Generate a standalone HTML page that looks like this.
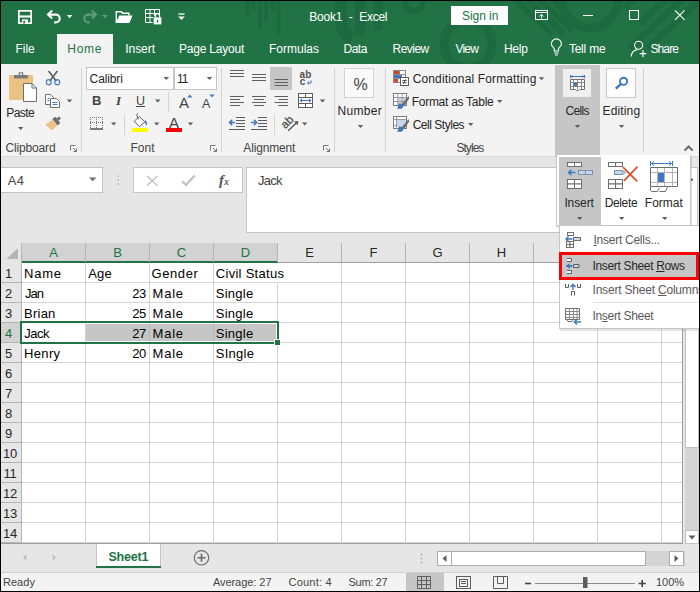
<!DOCTYPE html>
<html lang="en">
<head>
<meta charset="utf-8">
<title>Book1 - Excel</title>
<style>
html,body{margin:0;padding:0;}
body{width:700px;height:592px;overflow:hidden;background:#e6e6e6;font-family:"Liberation Sans",sans-serif;font-size:12px;color:#262626;position:relative;}
#app{position:absolute;left:0;top:0;width:700px;height:592px;overflow:hidden;background:#e6e6e6;}
.abs{position:absolute;}
svg.abs{left:0;top:0;overflow:visible;}
.t{position:absolute;white-space:nowrap;line-height:14px;height:14px;}
/* title + tabs */
#titlebar{left:0;top:0;width:700px;height:64px;background:#217346;}
#hometab{left:57px;top:34px;width:56px;height:30px;background:#f3f3f3;}
.tab{color:#fff;font-size:12px;top:42px;}
/* ribbon */
#ribbon{left:0;top:64px;width:700px;height:92px;background:#f3f3f3;}
.sep{position:absolute;width:1px;background:#d4d4d4;top:68px;height:84px;}
.grp{font-size:12px;color:#444;top:141px;}
.rb{font-size:12px;color:#262626;}
.box{position:absolute;background:#fff;border:1px solid #c6c6c6;box-sizing:border-box;}
/* grid */
#grid{left:1px;top:243px;width:682px;height:301px;background:#fff;overflow:hidden;}
.ch{position:absolute;top:243px;height:19px;text-align:center;font-size:13px;line-height:19px;color:#262626;}
.ch.sel{color:#217346;}
.rh{position:absolute;left:0px;width:17px;height:19px;font-size:13px;line-height:21px;color:#262626;text-align:center;}
.rh.sel{color:#217346;}
.c{position:absolute;font-size:13px;line-height:19px;height:19px;white-space:nowrap;color:#000;}
.n{text-align:right;width:60px;}
/* status */
#sheetbar{left:0;top:544px;width:700px;height:28px;background:#e6e6e6;}
#status{left:0;top:572px;width:700px;height:20px;background:#f3f3f3;border-top:1px solid #d0d0d0;box-sizing:border-box;}
.st{font-size:11px;color:#444;top:575px;}
/* dropdown */
.mi{font-size:12px;color:#5a5a5a;}
</style>
</head>
<body>
<div id="app">

<!-- ================= TITLE BAR ================= -->
<div id="titlebar" class="abs"></div>
<svg class="abs" width="700" height="64" viewBox="0 0 700 64">
  <!-- decorative darker pattern -->
  <g fill="#1e6a40" stroke="none">
    <rect x="245" y="0" width="5" height="16"/><rect x="251.500" y="0" width="4" height="10"/>
    <rect x="257.500" y="0" width="4.500" height="29"/><rect x="264" y="0" width="4" height="22"/>
    <rect x="271" y="0" width="4" height="12"/><rect x="276.500" y="0" width="4" height="34"/>
    <rect x="355" y="0" width="10" height="36"/><rect x="374" y="0" width="9" height="30"/>
  </g>
  <g fill="none" stroke="#1e6a40">
    <path d="M341 0 V20 C341 30 346 36 352 38" stroke-width="12"/>
    <circle cx="414" cy="2" r="9" stroke-width="6"/>
    <circle cx="468" cy="44" r="24" stroke-width="9"/>
    <path d="M516 0 L552 34 M528 0 L564 34 M540 0 L572 30 M552 0 L580 26" stroke-width="6"/>
    <path d="M562 0 A28 28 0 0 0 618 0" stroke-width="9"/>
    <path d="M625 8 L635 -2 M640 24 L670 -4 M630 48 L688 -6 M648 48 L704 -4" stroke-width="6.500"/>
  </g>
</svg>
<div id="hometab" class="abs"></div>

<span id="t_title" class="t" style="left:309.3px;top:10px;font-size:12px;color:#fff;word-spacing:3.6px;letter-spacing:-0.25px;">Book1 - Excel</span>
<div class="abs" style="left:451px;top:6px;width:57px;height:19px;background:#fff;"></div>
<span id="t_signin" class="t" style="left:462.0px;top:8.7px;font-size:12px;color:#217346;letter-spacing:-0.05px;">Sign in</span>

<span id="t_file" class="t tab" style="left:15.5px;letter-spacing:-0.03px;">File</span>
<span id="t_home" class="t tab" style="left:67.3px;color:#217346;letter-spacing:0.70px;">Home</span>
<span id="t_insert" class="t tab" style="left:125.3px;letter-spacing:-0.06px;">Insert</span>
<span id="t_pagelayout" class="t tab" style="left:179.0px;letter-spacing:-0.20px;">Page Layout</span>
<span id="t_formulas" class="t tab" style="left:269.0px;letter-spacing:0.00px;">Formulas</span>
<span id="t_data" class="t tab" style="left:343.4px;letter-spacing:-0.43px;">Data</span>
<span id="t_review" class="t tab" style="left:392.6px;letter-spacing:-0.54px;">Review</span>
<span id="t_view" class="t tab" style="left:455.4px;letter-spacing:-0.77px;">View</span>
<span id="t_help" class="t tab" style="left:503.9px;letter-spacing:-0.23px;">Help</span>
<span id="t_tellme" class="t tab" style="left:568.9px;letter-spacing:-0.22px;">Tell me</span>
<span id="t_share" class="t tab" style="left:650.4px;letter-spacing:-0.85px;">Share</span>

<svg class="abs" width="700" height="64" viewBox="0 0 700 64">
  <!-- save -->
  <g fill="none" stroke="#fff" stroke-width="1.7">
    <rect x="18.850" y="10.850" width="12.300" height="12.300"/>
    <path d="M18.850 16.500 H31.150" stroke-width="2.100"/>
    <rect x="22" y="19.400" width="6" height="4" fill="#fff" stroke="none"/>
    <rect x="23.300" y="20.800" width="1.700" height="2.600" fill="#217346" stroke="none"/>
  </g>
  <!-- undo -->
  <g fill="none" stroke="#fff" stroke-width="2.100" stroke-linejoin="miter">
    <path d="M52.200 10.600 L48 14.600 L52.200 18.600"/>
    <path d="M48.600 14.600 H55.800 A3.900 3.900 0 0 1 55.800 22.400 H54.200"/>
  </g>
  <path d="M66.800 15 H72.400 L69.600 18.200 Z" fill="#fff"/>
  <!-- redo (disabled) -->
  <g fill="none" stroke="#5f9a7b" stroke-width="2.100">
    <path d="M91.800 10.600 L96 14.600 L91.800 18.600"/>
    <path d="M95.400 14.600 H88.200 A3.900 3.900 0 0 0 88.200 22.400 H89.800"/>
  </g>
  <path d="M102 15 H107.600 L104.800 18.200 Z" fill="#5f9a7b"/>
  <!-- open folder -->
  <g fill="#fff" stroke="none">
    <path d="M115.6 23 V11 H121.5 L123 12.6 H129.6 V15.2 H128.2 V14 H122.3 L120.9 12.4 H117 V20.2 L119.3 15.4 H132.6 L129.4 23 Z"/>
  </g>
  <!-- grid with lock -->
  <g fill="none" stroke="#fff" stroke-width="1">
    <path d="M145.500 9.500 H159.500 V15 M145.500 9.500 V22.500 H152.500 M145.500 13.500 H159.500 M145.500 17.500 H153 M150 9.500 V22.500 M154.500 9.500 V16"/>
  </g>
  <rect x="153.600" y="17.400" width="7.800" height="7" fill="#fff"/>
  <path d="M155.400 17.600 V15.800 A2.100 2.100 0 0 1 159.600 15.800 V17.600" fill="none" stroke="#fff" stroke-width="1.300"/>
  <rect x="157" y="19.600" width="1.200" height="3" fill="#217346"/>
  <!-- customize qat -->
  <rect x="178.4" y="13.4" width="6.2" height="1.3" fill="#fff"/>
  <path d="M178.2 16.4 H184.8 L181.5 20 Z" fill="#fff"/>
  <!-- ribbon display options -->
  <g fill="none" stroke="#fff" stroke-width="1">
    <rect x="535.5" y="10.5" width="12" height="9"/>
    <path d="M535.5 12.5 H547.5"/>
    <path d="M541.5 18.5 V14.5 M539.3 16.5 L541.5 14.3 L543.7 16.5"/>
  </g>
  <!-- window controls -->
  <path d="M583 15.5 H593" stroke="#fff" stroke-width="1" fill="none"/>
  <rect x="629.5" y="10.5" width="9" height="9" fill="none" stroke="#fff" stroke-width="1"/>
  <path d="M675 10.3 L684.6 19.9 M684.6 10.3 L675 19.9" stroke="#fff" stroke-width="1.1" fill="none"/>
  <!-- light bulb -->
  <g fill="none" stroke="#fff" stroke-width="1.1">
    <path d="M554.3 51 V48.8 C553.6 47.2 551.4 46.4 551.4 43.9 A5 5 0 0 1 561.4 43.9 C561.4 46.4 559.2 47.2 558.5 48.8 V51 Z"/>
    <path d="M554.3 53 H558.5 M555 55 H557.8"/>
  </g>
  <!-- share person+ -->
  <g fill="none" stroke="#fff" stroke-width="1.1">
    <circle cx="638.6" cy="45.2" r="4"/>
    <path d="M631.2 56.5 C631.6 52.4 634.2 50.2 637 49.6"/>
    <path d="M643 50.3 V57 M639.7 53.6 H646.3" stroke-width="1.2"/>
  </g>
</svg>


<!-- ================= RIBBON ================= -->
<div id="ribbon" class="abs"></div>
<div class="abs" style="left:0;top:156px;width:700px;height:1px;background:#dadada;"></div>
<div class="abs" style="left:555px;top:65px;width:45px;height:92px;background:#c6c6c6;"></div>
<div class="abs" style="left:563px;top:69px;width:28px;height:28px;background:#efefef;"></div>
<div class="abs" style="left:270px;top:67px;width:22px;height:23px;background:#c6c6c6;"></div>

<div class="sep" style="left:81px;"></div>
<div class="sep" style="left:221px;"></div>
<div class="sep" style="left:334px;"></div>
<div class="sep" style="left:385px;"></div>
<div class="sep" style="left:643px;"></div>
<div class="sep" style="left:168px;top:92px;height:20px;"></div>
<div class="sep" style="left:124px;top:115px;height:20px;"></div>
<div class="sep" style="left:274px;top:114px;height:21px;"></div>

<span id="t_paste" class="t rb" style="left:6.2px;top:106px;letter-spacing:-0.52px;">Paste</span>
<span id="t_clipboard" class="t grp" style="left:5.5px;letter-spacing:-0.16px;">Clipboard</span>
<span id="t_font" class="t grp" style="left:130.4px;letter-spacing:0.07px;">Font</span>
<span id="t_alignment" class="t grp" style="left:243.3px;letter-spacing:-0.16px;">Alignment</span>
<span id="t_number" class="t rb" style="left:337.4px;top:104px;letter-spacing:0.34px;">Number</span>
<span id="t_styles" class="t grp" style="left:456.4px;letter-spacing:-0.94px;">Styles</span>
<span id="t_cells" class="t rb" style="left:565.6px;top:104px;letter-spacing:-0.70px;">Cells</span>
<span id="t_editing" class="t rb" style="left:602.5px;top:104px;letter-spacing:0.15px;">Editing</span>

<div class="box" style="left:86px;top:67px;width:88px;height:23px;"></div>
<div class="box" style="left:174px;top:67px;width:43px;height:23px;"></div>
<span id="t_calibri" class="t rb" style="left:89.6px;top:72px;letter-spacing:-0.12px;">Calibri</span>
<span id="t_11" class="t rb" style="left:177.0px;top:72px;letter-spacing:-1.0px;">11</span>
<span id="t_B" class="t" style="left:92px;top:94px;font-size:13px;font-weight:bold;color:#444;">B</span>
<span id="t_I" class="t" style="left:116px;top:94px;font-size:13px;font-style:italic;font-family:'Liberation Serif',serif;font-weight:bold;color:#444;">I</span>
<span id="t_U" class="t" style="left:136px;top:94px;font-size:12.5px;color:#444;text-decoration:underline;">U</span>
<span id="t_Agrow" class="t" style="left:179px;top:95.5px;font-size:15px;color:#444;">A</span>
<span id="t_Ashrink" class="t" style="left:202px;top:96.5px;font-size:12.5px;color:#444;">A</span>
<span id="t_Acolor" class="t" style="left:169px;top:116px;font-size:15px;color:#444;">A</span>

<div class="box" style="left:344px;top:68px;width:30px;height:30px;background:#fafafa;border-color:#d2d2d2;"></div>
<span id="t_pct" class="t" style="left:353.5px;top:77.5px;font-size:16px;color:#444;">%</span>
<div class="box" style="left:606px;top:68px;width:30px;height:30px;background:#fdfdfd;border-color:#c8c8c8;"></div>

<span id="t_cf" class="t rb" style="left:412.7px;top:72px;letter-spacing:0.14px;">Conditional Formatting</span>
<span id="t_fat" class="t rb" style="left:411.7px;top:95px;letter-spacing:-0.27px;">Format as Table</span>
<span id="t_cs" class="t rb" style="left:412.7px;top:118px;letter-spacing:-0.48px;">Cell Styles</span>

<svg class="abs" width="700" height="160" viewBox="0 0 700 160">
  <!-- dropdown arrows -->
  <g fill="#5e5e5e">
    <path d="M18 127 H23.4 L20.7 130 Z"/>
    <path d="M66.8 99.6 H72.2 L69.5 102.6 Z"/>
    <path d="M163.6 77 H169 L166.3 80 Z"/>
    <path d="M206.8 77 H212.2 L209.5 80 Z"/>
    <path d="M155 99.6 H160.4 L157.7 102.6 Z"/>
    <path d="M111 122.6 H116.4 L113.7 125.6 Z"/>
    <path d="M154 122.6 H159.4 L156.7 125.6 Z"/>
    <path d="M187.8 122.6 H193.2 L190.5 125.6 Z"/>
    <path d="M319.8 99.6 H325.2 L322.5 102.6 Z"/>
    <path d="M302 122.6 H307.4 L304.7 125.6 Z"/>
    <path d="M357.8 125 H363.2 L360.5 128 Z"/>
    <path d="M538.8 77.2 H544.2 L541.5 80.2 Z"/>
    <path d="M497 100 H502.4 L499.7 103 Z"/>
    <path d="M468 123 H473.4 L470.7 126 Z"/>
    <path d="M574.8 125 H580.2 L577.5 128 Z"/>
    <path d="M618.8 125 H624.2 L621.5 128 Z"/>
  </g>
  <!-- dialog launchers -->
  <g fill="none" stroke="#777" stroke-width="1">
    <path d="M70.5 150.5 V145.5 H75.5 M73 148 L76.5 151.5 M76.5 148.5 V151.5 H73.5"/>
    <path d="M210.5 150.5 V145.5 H215.5 M213 148 L216.5 151.5 M216.5 148.5 V151.5 H213.5"/>
    <path d="M323.5 150.5 V145.5 H328.5 M326 148 L329.5 151.5 M329.5 148.5 V151.5 H326.5"/>
  </g>
  <!-- collapse caret -->
  <path d="M684.5 150.600 L688.6 146.500 L692.7 150.600" fill="none" stroke="#6a6a6a" stroke-width="2"/>

  <!-- paste -->
  <rect x="9" y="75" width="24" height="25" rx="1" fill="#eac282"/>
  <path d="M14 78.5 V75 H18.6 V72.2 H23.2 V75 H27.8 V78.5 Z" fill="#7a7a7a"/>
  <rect x="19.8" y="73.4" width="2.2" height="1.6" fill="#f3f3f3"/>
  <path d="M23.5 83.5 H32 L36.5 88 V101.5 H23.5 Z" fill="#fff" stroke="#6e6e6e" stroke-width="1"/>
  <path d="M32 83.5 V88 H36.5" fill="none" stroke="#6e6e6e" stroke-width="1"/>
  <!-- scissors -->
  <g fill="none" stroke-width="1.4">
    <path d="M48.6 71 L56.4 81.2 M57.4 71 L49.6 81.2" stroke="#5e5e5e" stroke-width="1.6"/>
    <circle cx="48.8" cy="82.2" r="2.5" stroke="#4a7ebb" stroke-width="1.200"/>
    <circle cx="57.2" cy="82.2" r="2.5" stroke="#4a7ebb" stroke-width="1.200"/>
  </g>
  <!-- copy -->
  <g stroke="#6e6e6e" stroke-width="1" fill="#fff">
    <path d="M45.5 94.5 H50.5 L53.5 97.5 V104.5 H45.5 Z"/>
    <path d="M50.5 98.5 H56.5 L59.5 101.5 V107.5 H50.5 Z"/>
  </g>
  <path d="M47.5 98.5 H49.5 M47.5 100.5 H49.5 M52.5 102.5 H57.5 M52.5 104.5 H57.5" stroke="#4a7ebb" stroke-width="1" fill="none"/>
  <!-- format painter -->
  <path d="M45.2 124.5 L52.5 119.8 L57 126 L51.5 130.3 Z" fill="#eac282"/>
  <path d="M52.2 118.8 L55.6 116.8 L60.4 123 L57.4 125.6 Z" fill="#6e6e6e"/>
  <path d="M56.6 118.2 L59.2 116.4 L61 118.6 L58.6 120.6 Z" fill="#6e6e6e"/>

  <!-- underline for U -->
  <!-- grow/shrink triangles -->
  <path d="M187.2 97.4 L189.8 94.4 L192.4 97.4 Z" fill="#3f77c1"/>
  <path d="M209.4 94.4 H214.6 L212 97.4 Z" fill="#3f77c1"/>
  <!-- borders icon -->
  <g stroke="#777" stroke-width="1" stroke-dasharray="1 1" fill="none">
    <path d="M90.5 117 V128 M96.5 117 V128 M102.5 117 V128 M90 117.5 H103 M90 122.5 H103"/>
  </g>
  <path d="M90 129 H103" stroke="#444" stroke-width="1.4"/>
  <!-- fill bucket -->
  <rect x="132" y="128" width="16" height="4" fill="#ffff00"/>
  <path d="M139.2 116.4 L144.8 121.8 L139.6 126.6 L134.2 121.4 Z" fill="#fff" stroke="#5e5e5e" stroke-width="1"/>
  <path d="M138 113.8 C136.8 113.8 136.6 115 137 116 L138.6 119.4" fill="none" stroke="#5e5e5e" stroke-width="1"/>
  <path d="M145 120 C147 121.6 147.6 123.6 146.6 125.4 C145.2 124.6 144.8 122.6 145 120 Z" fill="#3f77c1"/>
  <!-- font color bar -->
  <rect x="166" y="128" width="16" height="4" fill="#ff0000"/>

  <!-- alignment row 1 -->
  <g stroke="#5e5e5e" stroke-width="1" fill="none">
    <path d="M230 70.5 H244 M230 73.5 H244 M230 76.5 H244"/>
    <path d="M252 74.5 H266 M252 77.5 H266 M252 80.5 H266"/>
    <path d="M274.5 79.5 H288 M274.5 82.5 H288 M274.5 85.5 H288"/>
    <path d="M230 96.5 H244 M230 99.5 H240 M230 102.5 H244 M230 105.5 H240"/>
    <path d="M252 96.5 H266 M254 99.5 H264 M252 102.5 H266 M254 105.5 H264"/>
    <path d="M274.5 96.5 H288 M278.5 99.5 H288 M274.5 102.5 H288 M278.5 105.5 H288"/>
    <path d="M236 117.5 H245 M236 120.5 H245 M236 123.5 H245 M236 126.5 H245 M229 129.5 H245"/>
    <path d="M258 117.5 H267 M258 120.5 H267 M258 123.5 H267 M258 126.5 H267 M251 129.5 H267"/>
  </g>
  <!-- indent arrows -->
  <g stroke="#3f77c1" stroke-width="1.6" fill="none">
    <path d="M229.6 122.5 H235 M232.2 119.8 L229.6 122.5 L232.2 125.2"/>
    <path d="M251 122.5 H256.6 M254 119.8 L256.6 122.5 L254 125.2"/>
  </g>
  <!-- wrap text -->
  <text x="299.6" y="77.6" font-family="Liberation Sans, sans-serif" font-size="10" font-weight="bold" fill="#505050" letter-spacing="0.2">ab</text>
  <text x="299.8" y="84.9" font-family="Liberation Sans, sans-serif" font-size="10" font-weight="bold" fill="#505050">c</text>
  <path d="M311 80.4 V83 H307.6 M309 81.600 L307.400 83 L309 84.400" stroke="#3f77c1" stroke-width="1" fill="none"/>
  <!-- merge & center -->
  <g stroke="#5e5e5e" stroke-width="1" fill="#fff">
    <rect x="298.5" y="93.5" width="14" height="14"/>
    <path d="M298.5 97.5 H312.5 M298.5 103.5 H312.5 M305.5 93.5 V97.5 M305.5 103.5 V107.5" fill="none"/>
  </g>
  <path d="M300.4 100.5 H310.6 M302 99 L300.4 100.5 L302 102 M309 99 L310.6 100.5 L309 102" stroke="#3f77c1" stroke-width="1.1" fill="none"/>
  <!-- orientation -->
  <text transform="translate(285.3,129.3) rotate(-45)" font-family="Liberation Sans, sans-serif" font-size="11.500" fill="#4a4a4a" stroke="#4a4a4a" stroke-width="0.250">ab</text>
  <path d="M288.200 130.700 L297.200 122" stroke="#5a5a5a" stroke-width="1.500" fill="none"/>
  <path d="M298.300 120.900 L294 121.500 L297.700 125.200 Z" fill="#5a5a5a"/>

  <!-- conditional formatting icon -->
  <g>
    <rect x="393.5" y="70.5" width="12" height="12" fill="#fff" stroke="#8a8a8a"/>
    <rect x="394" y="71" width="5" height="3.4" fill="#d24726"/>
    <rect x="394" y="75" width="8" height="3.4" fill="#3f77c1"/>
    <rect x="394" y="79" width="4" height="3.2" fill="#d24726"/>
    <path d="M399.5 70.5 V75 M393.5 74.6 H405.5 M393.5 78.6 H400" stroke="#8a8a8a" fill="none"/>
    <rect x="400.5" y="77.5" width="8" height="8" fill="#fff" stroke="#5e5e5e"/>
    <path d="M402.4 80.5 H406.6 M402.4 82.6 H406.6 M405.6 79.4 L403.4 83.8" stroke="#444" stroke-width="0.9" fill="none"/>
  </g>
  <!-- format as table icon -->
  <g>
    <rect x="393.5" y="93.5" width="13" height="12" fill="#fff" stroke="#7a7a7a"/>
    <rect x="398" y="98" width="8" height="7" fill="#c8d6ea"/><path d="M393.5 97.5 H406.5 M393.5 101.5 H406.5 M397.8 93.5 V105.5 M402.2 93.5 V105.5" stroke="#9a9a9a" fill="none"/>
    <path d="M408.6 96 L401.4 104.4 L404 106.2 L409.2 98.6 Z" fill="#6e6e6e"/>
    <path d="M399 103.6 C401 103 403.6 104.6 403.2 107 C402.4 109.2 398.6 109 397 108.4 C398.6 107.4 398 105 399 103.6 Z" fill="#3f77c1"/>
  </g>
  <!-- cell styles icon -->
  <g>
    <rect x="393.5" y="116.500" width="13" height="12" fill="#fff" stroke="#7a7a7a"/>
    <rect x="397" y="120" width="9" height="7" fill="#c8d6ea"/>
    <path d="M393.5 119.500 H406.5 M396.500 116.500 V128.500 M393.500 125.500 H397" stroke="#9a9a9a" fill="none"/>
    <path d="M408.600 119 L401.400 127.400 L404 129.200 L409.200 121.600 Z" fill="#6e6e6e"/>
    <path d="M399 126.600 C401 126 403.600 127.600 403.200 130 C402.400 132.200 398.600 132 397 131.400 C398.600 130.400 398 128 399 126.600 Z" fill="#3f77c1"/>
  </g>

  <!-- cells icon -->
  <g>
    <path d="M570.5 75 V78 M584.5 75 V78 M571 76.500 H584 M572.600 75.200 L571.200 76.500 L572.600 77.800 M582.400 75.200 L583.800 76.500 L582.400 77.800" stroke="#3f77c1" stroke-width="1" fill="none"/>
    <path d="M570.500 79.500 H584.500 V89.500 H579.500 L578.500 90.500 H576.500 L575.500 89.500 H570.500 Z" fill="#fff" stroke="#6e6e6e"/>
    <path d="M570.500 82.500 H584.500 M570.500 86.500 H584.500 M573.500 79.500 V89.500 M577.500 79.500 V89.500 M581.500 79.500 V89.500" stroke="#8a8a8a" fill="none"/>
    <rect x="574" y="83" width="3" height="3" fill="#3f77c1"/>
  </g>
  <!-- editing (search) icon -->
  <circle cx="623.600" cy="81.300" r="3.600" fill="none" stroke="#3f77c1" stroke-width="1.900"/>
  <path d="M620.800 84.200 L615.800 88.600" stroke="#3f77c1" stroke-width="2.400" fill="none"/>
</svg>


<!-- ================= FORMULA BAR ================= -->
<div class="box" style="left:0px;top:167px;width:103px;height:26px;"></div>
<span id="t_a4" class="t" style="left:7.8px;top:174px;font-size:13px;color:#444;letter-spacing:0.30px;">A4</span>
<div class="box" style="left:133px;top:167px;width:110px;height:26px;"></div>
<div class="box" style="left:246px;top:167px;width:452px;height:66px;"></div>
<span id="t_fjack" class="t" style="left:258.1px;top:174px;font-size:13px;color:#444;letter-spacing:-0.77px;">Jack</span>
<span id="t_fx" class="t" style="left:219px;top:173px;font-size:14px;font-style:italic;font-family:'Liberation Serif',serif;color:#555;"><span style="font-size:15px;font-weight:bold;">f</span><span style="font-size:10px;font-weight:bold;">x</span></span>
<svg class="abs" width="700" height="240" viewBox="0 0 700 240">
  <path d="M89 177.400 H96.400 L92.700 181.200 Z" fill="#6e6e6e"/>
  <path d="M690.500 180.500 L692 178 L693.500 180.500 Z" fill="#444"/>
  <g fill="#b0b0b0"><rect x="117.500" y="175.500" width="1.400" height="1.400"/><rect x="117.500" y="179.500" width="1.400" height="1.400"/><rect x="117.500" y="183.500" width="1.400" height="1.400"/></g>
  <path d="M147 176 L157.400 185.400 M157.400 176 L147 185.400" stroke="#c0c0c0" stroke-width="1.400" fill="none"/>
  <path d="M182 181.200 L186 185 L194.800 175.600" stroke="#c0c0c0" stroke-width="2.200" fill="none"/>
</svg>


<!-- ================= GRID ================= -->
<div id="grid" class="abs"></div>
<div class="abs" style="left:1px;top:243px;width:682px;height:19px;background:#e6e6e6;"></div>
<div class="abs" style="left:1px;top:262px;width:682px;height:1px;background:#9f9f9f;"></div>
<div class="abs" style="left:1px;top:243px;width:20px;height:301px;background:#e6e6e6;"></div>
<div class="abs" style="left:21px;top:243px;width:1px;height:301px;background:#b4b4b4;"></div>
<div class="abs" style="left:22px;top:243px;width:256px;height:18px;background:#d2d2d2;"></div>
<div class="abs" style="left:22px;top:261px;width:256px;height:2px;background:#217346;"></div>
<div class="abs" style="left:1px;top:323px;width:19px;height:19px;background:#d2d2d2;"></div>
<svg class="abs" width="700" height="592" viewBox="0 0 700 592">
<g stroke="#d4d4d4" stroke-width="1" fill="none">
<path d="M85.5 263 V544 M149.5 263 V544 M213.5 263 V544 M277.5 263 V544 M341.5 263 V544 M405.5 263 V544 M469.5 263 V544 M533.5 263 V544 M597.5 263 V544 M661.5 263 V544 M22 282.5 H682 M22 302.5 H682 M22 322.5 H682 M22 342.5 H682 M22 362.5 H682 M22 382.5 H682 M22 402.5 H682 M22 422.5 H682 M22 442.5 H682 M22 462.5 H682 M22 482.5 H682 M22 502.5 H682 M22 522.5 H682 M22 542.5 H682"/>
</g>
<path d="M85.5 243 V262 M149.5 243 V262 M213.5 243 V262 M277.5 243 V262 M341.5 243 V262 M405.5 243 V262 M469.5 243 V262 M533.5 243 V262 M597.5 243 V262 M661.5 243 V262" stroke="#b4b4b4" stroke-width="1" fill="none"/>
<path d="M1 282.5 H21 M1 302.5 H21 M1 322.5 H21 M1 342.5 H21 M1 362.5 H21 M1 382.5 H21 M1 402.5 H21 M1 422.5 H21 M1 442.5 H21 M1 462.5 H21 M1 482.5 H21 M1 502.5 H21 M1 522.5 H21 M1 542.5 H21" stroke="#b4b4b4" stroke-width="1" fill="none"/>
<path d="M18 248.200 V259 H6.400 Z" fill="#b4b4b4"/>
<rect x="86" y="324" width="190" height="17" fill="#c6c6c6"/>
<path d="M149.500 324 V341 M213.500 324 V341" stroke="#b8b8b8" stroke-width="1" fill="none"/>
<rect x="21" y="322" width="257" height="21" fill="none" stroke="#217346" stroke-width="2"/>
<rect x="274" y="339" width="7" height="7" fill="#fff"/>
<rect x="275" y="340" width="5" height="5" fill="#217346"/>
<path d="M682.500 243 V544" stroke="#9f9f9f" stroke-width="1" fill="none"/>
<path d="M1 543.500 H683" stroke="#9f9f9f" stroke-width="1" fill="none"/>
</svg>
<div class="ch sel" style="left:22px;width:63px;">A</div>
<div class="ch sel" style="left:86px;width:63px;">B</div>
<div class="ch sel" style="left:150px;width:63px;">C</div>
<div class="ch sel" style="left:214px;width:63px;">D</div>
<div class="ch" style="left:278px;width:63px;">E</div>
<div class="ch" style="left:342px;width:63px;">F</div>
<div class="ch" style="left:406px;width:63px;">G</div>
<div class="ch" style="left:470px;width:63px;">H</div>
<div class="ch" style="left:534px;width:63px;">I</div>
<div class="ch" style="left:598px;width:63px;">J</div>
<div class="rh" style="top:263px;">1</div>
<div class="rh" style="top:283px;">2</div>
<div class="rh" style="top:303px;">3</div>
<div class="rh sel" style="top:323px;">4</div>
<div class="rh" style="top:343px;">5</div>
<div class="rh" style="top:363px;">6</div>
<div class="rh" style="top:383px;">7</div>
<div class="rh" style="top:403px;">8</div>
<div class="rh" style="top:423px;">9</div>
<div class="rh" style="top:443px;left:1.5px;letter-spacing:-0.3px;">10</div>
<div class="rh" style="top:463px;left:1.5px;letter-spacing:-0.3px;">11</div>
<div class="rh" style="top:483px;left:1.5px;letter-spacing:-0.3px;">12</div>
<div class="rh" style="top:503px;left:1.5px;letter-spacing:-0.3px;">13</div>
<div class="rh" style="top:523px;left:1.5px;letter-spacing:-0.3px;">14</div>
<div id="c1" class="c" style="left:24.0px;top:264px;letter-spacing:0.80px;">Name</div>
<div id="c2" class="c" style="left:88.2px;top:264px;letter-spacing:0.20px;">Age</div>
<div id="c3" class="c" style="left:151.6px;top:264px;letter-spacing:0.56px;">Gender</div>
<div class="abs" style="left:277px;top:263px;width:1px;height:19px;background:#fff;"></div>
<div id="c4" class="c" style="left:215.8px;top:264px;letter-spacing:0.28px;">Civil Status</div>
<div id="c5" class="c" style="left:25.0px;top:284px;letter-spacing:-1.0px;">Jan</div>
<div id="c6" class="c n" style="left:86px;top:284px;letter-spacing:-0.3px;">23</div>
<div id="c7" class="c" style="left:152.6px;top:284px;letter-spacing:0.74px;">Male</div>
<div id="c8" class="c" style="left:215.8px;top:284px;letter-spacing:0.24px;">Single</div>
<div id="c9" class="c" style="left:24.0px;top:304px;letter-spacing:0.25px;">Brian</div>
<div id="c10" class="c n" style="left:86px;top:304px;letter-spacing:-0.3px;">25</div>
<div id="c11" class="c" style="left:152.6px;top:304px;letter-spacing:0.74px;">Male</div>
<div id="c12" class="c" style="left:215.8px;top:304px;letter-spacing:0.24px;">Single</div>
<div id="c13" class="c" style="left:24.2px;top:324px;letter-spacing:-0.5px;">Jack</div>
<div id="c14" class="c n" style="left:86px;top:324px;letter-spacing:-0.3px;">27</div>
<div id="c15" class="c" style="left:152.6px;top:324px;letter-spacing:0.74px;">Male</div>
<div id="c16" class="c" style="left:215.8px;top:324px;letter-spacing:0.24px;">Single</div>
<div id="c17" class="c" style="left:24.0px;top:344px;letter-spacing:0.36px;">Henry</div>
<div id="c18" class="c n" style="left:86px;top:344px;letter-spacing:-0.3px;">20</div>
<div id="c19" class="c" style="left:152.6px;top:344px;letter-spacing:0.74px;">Male</div>
<div id="c20" class="c" style="left:215.8px;top:344px;letter-spacing:0.24px;">SIngle</div>


<!-- ================= SHEET BAR + STATUS ================= -->
<div id="sheetbar" class="abs"></div>
<div class="abs" style="left:96px;top:544px;width:65px;height:23px;background:#fff;border-left:1px solid #c6c6c6;border-right:1px solid #c6c6c6;box-sizing:border-box;"></div>
<div class="abs" style="left:96px;top:566px;width:65px;height:2px;background:#217346;"></div>
<span id="t_sheet1" class="t" style="left:108.4px;top:550px;font-size:12.5px;font-weight:bold;color:#217346;letter-spacing:-0.18px;">Sheet1</span>
<div id="status" class="abs"></div>
<div class="abs" style="left:406px;top:573px;width:38px;height:18px;background:#c6c6c6;"></div>
<span id="t_ready" class="t st" style="left:2.9px;letter-spacing:0.08px;">Ready</span>
<span id="t_avg" class="t st" style="left:212.9px;letter-spacing:-0.05px;">Average: 27</span>
<span id="t_count" class="t st" style="left:288.6px;letter-spacing:0.20px;">Count: 4</span>
<span id="t_sum" class="t st" style="left:348.6px;letter-spacing:-0.32px;">Sum: 27</span>
<span id="t_zoom" class="t st" style="left:656.0px;letter-spacing:0.00px;">100%</span>
<!-- scrollbars -->
<div class="abs" style="left:685px;top:243px;width:14px;height:301px;background:#d4d4d4;"></div>
<div class="abs" style="left:685px;top:243px;width:14px;height:205px;background:#fff;border:1px solid #c0c0c0;box-sizing:border-box;"></div>
<div class="abs" style="left:685px;top:530px;width:14px;height:14px;background:#fff;border:1px solid #c0c0c0;box-sizing:border-box;"></div>
<div class="abs" style="left:437px;top:551px;width:248px;height:15px;background:#d4d4d4;"></div>
<div class="box" style="left:437px;top:551px;width:15px;height:15px;border-color:#ababab;"></div>
<div class="box" style="left:451px;top:551px;width:195px;height:15px;border-color:#ababab;"></div>
<div class="box" style="left:669px;top:551px;width:15px;height:15px;border-color:#ababab;"></div>
<svg class="abs" width="700" height="592" viewBox="0 0 700 592">
  <path d="M26.400 554 V561 L23 557.500 Z M52.600 554 V561 L56 557.500 Z" fill="#c0c0c0"/>
  <circle cx="201.500" cy="557.800" r="7.200" fill="none" stroke="#6a6a6a" stroke-width="1.100"/>
  <path d="M197.500 557.800 H205.500 M201.500 553.800 V561.800" stroke="#6a6a6a" stroke-width="1.600" fill="none"/>
  <g fill="#9a9a9a"><rect x="420.800" y="553.800" width="1.400" height="1.400"/><rect x="420.800" y="557.800" width="1.400" height="1.400"/><rect x="420.800" y="561.800" width="1.400" height="1.400"/></g>
  <path d="M446.500 555 V562 L442.500 558.500 Z M674.500 555 V562 L678.500 558.500 Z" fill="#5e5e5e"/>
  <path d="M688.500 535.500 H695.500 L692 539.500 Z" fill="#5e5e5e"/>
  <!-- view buttons -->
  <g fill="none" stroke="#5e5e5e" stroke-width="1">
    <path d="M417.500 576.500 H430.500 V588.500 H417.500 Z M417.500 580.500 H430.500 M417.500 584.500 H430.500 M421.500 576.500 V588.500 M426.500 576.500 V588.500"/>
    <rect x="456.500" y="576.500" width="14" height="12"/>
    <rect x="459.500" y="579.500" width="8" height="7"/>
    <path d="M461 581.500 H466 M461 583.500 H466"/>
    <path d="M493.500 576.500 H507.500 V588.500 H493.500 Z M497.500 576.500 V583.500 H503.500 V576.500"/>
  </g>
  <!-- zoom slider -->
  <path d="M525 583.500 H531" stroke="#444" stroke-width="1.600" fill="none"/>
  <path d="M535 583.500 H635" stroke="#8a8a8a" stroke-width="1" fill="none"/>
  <rect x="583" y="577" width="4.500" height="11" fill="#5e5e5e"/>
  <path d="M638.600 583.500 H645.800 M642.200 580 V587" stroke="#444" stroke-width="1.600" fill="none"/>
</svg>


<!-- ================= DROPDOWN ================= -->
<div class="abs" style="left:556px;top:157px;width:136px;height:71px;background:rgba(0,0,0,0.10);"></div>
<div class="abs" style="left:556px;top:155px;width:135px;height:71px;background:#fff;border:1px solid #c6c6c6;box-sizing:border-box;border-top:none;"></div>
<div class="abs" style="left:559px;top:157px;width:42px;height:69px;background:#c6c6c6;"></div>
<div class="abs" style="left:560px;top:226px;width:141px;height:105px;background:rgba(0,0,0,0.10);"></div>
<div class="abs" style="left:559px;top:225px;width:142px;height:104px;background:#fff;border:1px solid #c6c6c6;box-sizing:border-box;"></div>
<div class="abs" style="left:559px;top:252px;width:140px;height:28px;background:#c6c6c6;border:3px solid #ff0000;box-sizing:border-box;"></div>
<div class="abs" style="left:593px;top:302px;width:108px;height:1px;background:#e1e1e1;"></div>

<span id="t_dinsert" class="t rb" style="left:564.4px;top:196px;letter-spacing:-0.10px;">Insert</span>
<span id="t_ddelete" class="t rb" style="left:604.7px;top:196px;letter-spacing:-0.36px;">Delete</span>
<span id="t_dformat" class="t rb" style="left:644.8px;top:196px;letter-spacing:0.02px;">Format</span>
<span id="t_m1" class="t mi" style="left:593.5px;top:233px;letter-spacing:-0.26px;"><u>I</u>nsert Cells...</span>
<span id="t_m2" class="t mi" style="left:592.5px;top:259px;color:#262626;letter-spacing:-0.34px;">Insert Sheet <u>R</u>ows</span>
<span id="t_m3" class="t mi" style="left:592.5px;top:283px;letter-spacing:-0.2px;">Insert Sheet <u>C</u>olumns</span>
<span id="t_m4" class="t mi" style="left:592.5px;top:309px;letter-spacing:-0.33px;">In<u>s</u>ert Sheet</span>

<svg class="abs" width="700" height="592" viewBox="0 0 700 592">
  <g fill="#5e5e5e">
    <path d="M577 217 H582.400 L579.700 220 Z"/>
    <path d="M619 217 H624.400 L621.700 220 Z"/>
    <path d="M662 217 H667.400 L664.700 220 Z"/>
  </g>
  <!-- Insert icon -->
  <g fill="#fff" stroke="#6e6e6e" stroke-width="1">
    <rect x="567.500" y="162.500" width="7" height="4"/><rect x="574.500" y="162.500" width="7" height="4"/>
    <rect x="567.500" y="179.500" width="7" height="4.500"/><rect x="574.500" y="179.500" width="7" height="4.500"/>
    <rect x="567.500" y="184" width="7" height="4.500"/><rect x="574.500" y="184" width="7" height="4.500"/>
  </g>
  <g fill="#c8d6ea" stroke="#7a8fae" stroke-width="1">
    <rect x="578.500" y="170.500" width="7" height="4"/><rect x="585.500" y="170.500" width="7" height="4"/>
  </g>
  <path d="M568.600 172.500 H575.400 M571.400 169.700 L568.600 172.500 L571.400 175.300" stroke="#3f77c1" stroke-width="1.600" fill="none"/>
  <!-- Delete icon -->
  <g fill="#fff" stroke="#6e6e6e" stroke-width="1">
    <rect x="608.500" y="162.500" width="7" height="4"/><rect x="615.500" y="162.500" width="7" height="4"/>
    <rect x="608.500" y="179.500" width="7" height="4.500"/><rect x="615.500" y="179.500" width="7" height="4.500"/>
    <rect x="608.500" y="184" width="7" height="4.500"/><rect x="615.500" y="184" width="7" height="4.500"/>
  </g>
  <rect x="614.500" y="170.500" width="8" height="4" fill="#c8d6ea" stroke="#7a8fae"/>
  <path d="M622.500 170.500 L625.500 172.500 L622.500 174.500" fill="#c8d6ea" stroke="#7a8fae"/>
  <path d="M623.400 167.600 L636.800 180.800 M637 167.200 L624.400 180.400" stroke="#d6532f" stroke-width="1.800" stroke-linecap="round" fill="none"/>
  <!-- Format icon -->
  <path d="M650.500 161 V166 M672.500 161 V166 M651.500 163.500 H671.500 M654 161.300 L651.600 163.500 L654 165.700 M669 161.300 L671.400 163.500 L669 165.700" stroke="#3f77c1" stroke-width="1" fill="none"/>
  <path d="M650.500 167.500 H677.500 V186.500 H650.500 Z" fill="#fff" stroke="#6e6e6e"/>
  <path d="M651 172.500 H677 M651 182.500 H677 M657.500 168 V186 M664.500 168 V186 M672.500 168 V186" stroke="#b4b4b4" fill="none"/>
  <path d="M650.500 186.500 V190.500 L651.500 191.500 H657.500 L659.500 188 M659.500 191.500 H665.500 L667.500 187" stroke="#6e6e6e" fill="none"/>
  <rect x="658" y="173" width="6" height="9" fill="#3f77c1"/>

  <!-- menu icon 1: insert cells -->
  <g fill="#fff" stroke="#6e6e6e" stroke-width="1">
    <rect x="567.500" y="232.500" width="6" height="3"/>
    <rect x="566.500" y="241.500" width="3.500" height="3"/><rect x="570" y="241.500" width="3.500" height="3"/>
    <rect x="566.500" y="244.500" width="3.500" height="3"/><rect x="570" y="244.500" width="3.500" height="3"/>
    <rect x="573.500" y="237.500" width="7" height="3" fill="#c8d6ea"/>
  </g>
  <path d="M566 239 H572.500 M568.600 236.400 L566 239 L568.600 241.600" stroke="#3f77c1" stroke-width="1.400" fill="none"/>
  <!-- menu icon 2: insert rows -->
  <g fill="#fff" stroke="#5e5e5e" stroke-width="1">
    <path d="M567 258.500 H571.500 V261.500 H567 Z M567 270.500 H571.500 V273.500 H567 Z" stroke="none"/>
    <path d="M567 258.500 H571.500 V261.500 H567 M567 270.500 H571.500 V273.500 H567" fill="none"/>
    <path d="M573.500 264.500 H579 V267.500 H573.500 Z" fill="#c8d6ea"/>
  </g>
  <path d="M566.600 266 H572.400" stroke="#3f77c1" stroke-width="1.800" fill="none"/>
  <path d="M569.600 263.200 L566 266 L569.600 268.800 Z" fill="#3f77c1"/>
  <!-- menu icon 3: insert columns -->
  <g fill="none" stroke="#5e5e5e" stroke-width="1">
    <path d="M565.500 284 V287.500 H568.500 V284 M577.500 284 V287.500 H580.500 V284"/>
    <path d="M571.500 295.500 V291.500 H574.500 V295.500"/>
  </g>
  <path d="M573 290 V284.600 M570.400 287 L573 284.400 L575.600 287" stroke="#3f77c1" stroke-width="1.400" fill="none"/>
  <!-- menu icon 4: insert sheet -->
  <g fill="#fff" stroke="#6e6e6e" stroke-width="1">
    <path d="M565.500 308.500 H579.500 V319.500 H565.500 Z"/>
    <path d="M565.500 311.500 H579.500 M565.500 314.500 H579.500 M565.500 317.500 H579.500 M569.500 308.500 V319.500 M573.500 308.500 V319.500 M577 308.500 V319.500" fill="none" stroke="#8a8a8a"/>
    <path d="M566.500 319.500 L568 321.500 H572 L573.500 319.500" fill="none"/>
  </g>
  <path d="M574.400 322 H581 M577 319.400 L574.400 322 L577 324.600" stroke="#3f77c1" stroke-width="1.400" fill="none"/>
</svg>


<!-- black frame -->
<div class="abs" style="left:0;top:0;width:700px;height:1px;background:#000;"></div>
<div class="abs" style="left:0;top:591px;width:700px;height:1px;background:#000;"></div>
<div class="abs" style="left:0;top:0;width:1px;height:592px;background:#000;"></div>
<div class="abs" style="left:699px;top:0;width:1px;height:592px;background:#000;"></div>
</div>
</body>
</html>
